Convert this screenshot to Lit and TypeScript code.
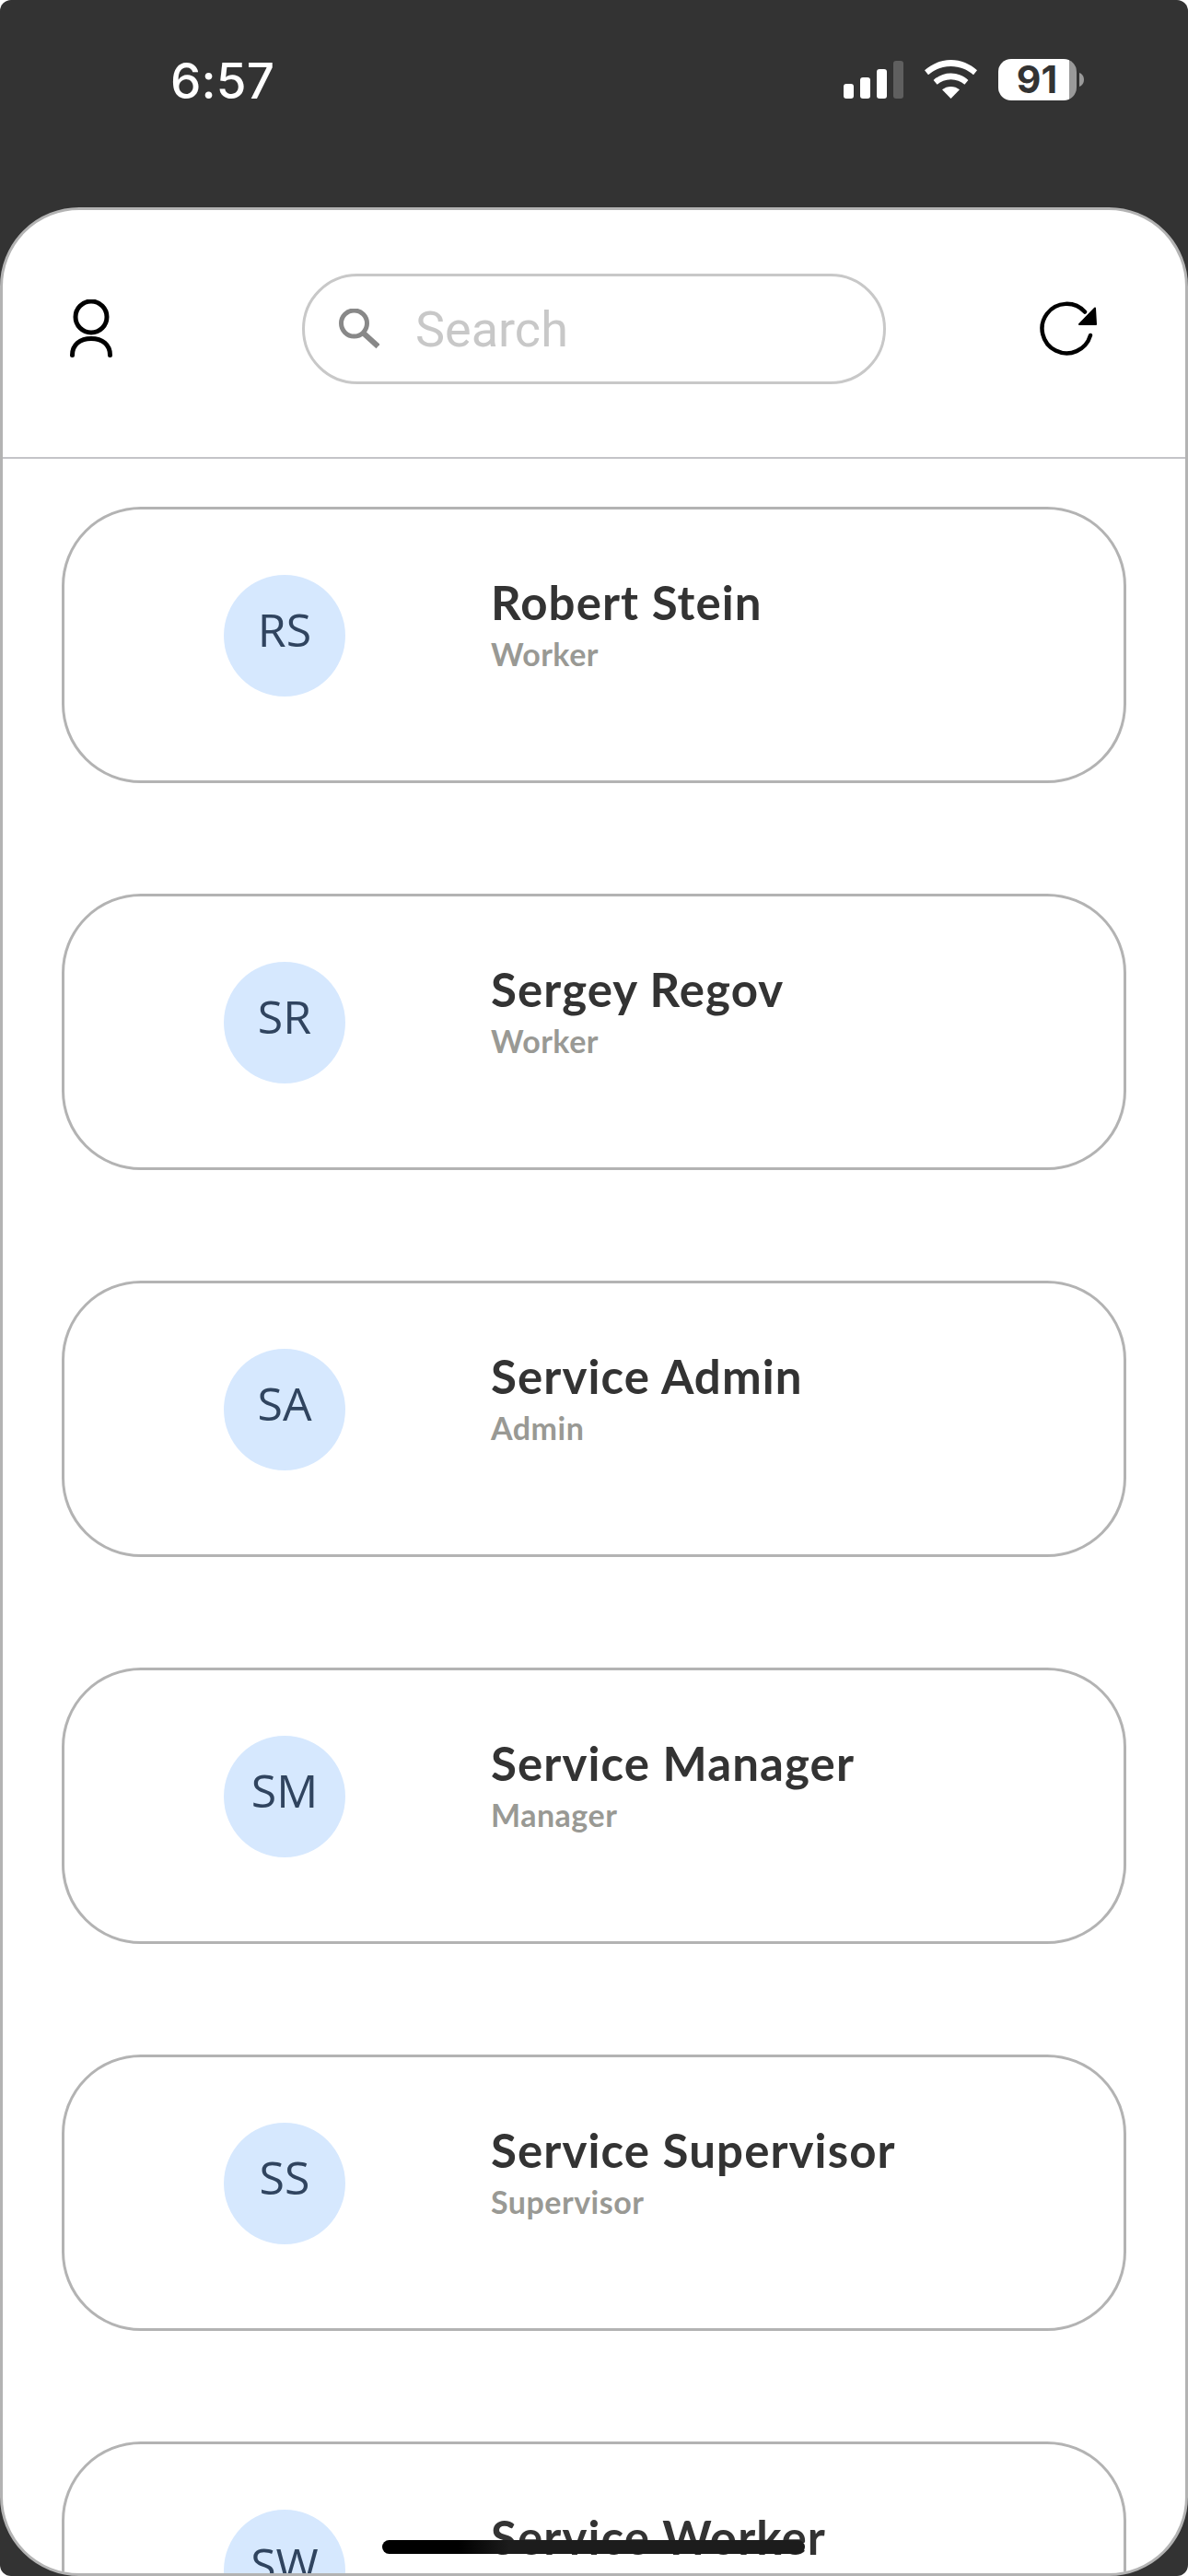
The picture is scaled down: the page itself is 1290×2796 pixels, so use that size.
import { LitElement, html, css, svg } from "lit";
import { customElement } from "lit/decorators.js";

const PEOPLE = [
  ["RS", "Robert Stein", "Worker"],
  ["SR", "Sergey Regov", "Worker"],
  ["SA", "Service Admin", "Admin"],
  ["SM", "Service Manager", "Manager"],
  ["SS", "Service Supervisor", "Supervisor"],
  ["SW", "Service Worker", "Worker"],
];

@customElement("app-root")
export class AppRoot extends LitElement {
  static styles = css`
    :host { display: block; width: 1290px; height: 2796px; background: #fff; }
    .screen { width: 1290px; height: 2796px; background: #333; border-radius: 12px; overflow: hidden; display: flex; flex-direction: column; position: relative; }
    .status { height: 225px; flex: none; box-sizing: border-box; padding: 61px 113px 0 185px; display: flex; justify-content: space-between; align-items: flex-start; }
    .time { font: 500 53px/54px Inter, sans-serif; color: #fff; letter-spacing: 0.2px; }
    .status-icons { display: flex; align-items: flex-start; }
    .sig { margin-top: 5px; }
    .wifi { margin: 4px 0 0 23px; }
    .batt { margin: 3px 0 0 23px; position: relative; width: 93px; height: 45px; }
    .batt svg { position: absolute; inset: 0; }
    .batt span { position: absolute; left: 0; width: 84px; top: 0; text-align: center; font: 700 41px/45px Inter, sans-serif; color: #333; }
    .panel { flex: 1; min-height: 0; box-sizing: border-box; background: #fff; border: 3px solid #b3b3b3; border-radius: 86px; overflow: hidden; }
    .head { height: 270px; box-sizing: border-box; border-bottom: 2px solid #c4c4c8; padding: 69px 0 0 73px; display: flex; align-items: flex-start; }
    .search { width: 634px; height: 120px; box-sizing: border-box; margin-left: 206px; border: 3px solid #c8c8c8; border-radius: 60px; display: flex; align-items: center; padding-left: 37px; }
    .search span { font: 400 54px Roboto, sans-serif; color: #c8c8c8; margin-left: 39px; }
    .refresh { margin-left: 167px; margin-top: 30px; }
    .person { margin-top: 28px; }
    .list { padding: 52px 64px 0 64px; display: flex; flex-direction: column; gap: 120px; }
    .card { height: 300px; flex: none; box-sizing: border-box; border: 3px solid #b3b3b3; border-radius: 86px; display: flex; align-items: flex-start; padding: 71px 0 0 173px; }
    .avatar { width: 132px; height: 132px; border-radius: 50%; background: #d6e8fe; color: #30445f; display: flex; align-items: center; justify-content: center; font: 400 50px "Open Sans", sans-serif; flex: none; }
    .avatar span { margin-top: -14px; }
    .info { margin-left: 158px; }
    .name { font: 700 51px/60px Lato, sans-serif; letter-spacing: 1.1px; color: #333; }
    .role { font: 700 34px/36px Lato, sans-serif; letter-spacing: 0.5px; color: #999994; margin-top: 8px; }
    .home { position: absolute; left: 415px; top: 2757px; width: 459px; height: 15px; border-radius: 8px; background: linear-gradient(90deg, #000 0%, #000 18%, #1c1c1c 30%, #1c1c1c 100%); }
  `;

  private sig() {
    const bars = [[0, 25, "#fff"], [18, 18, "#fff"], [36, 9, "#fff"], [54, 0, "#5f5f5f"]] as const;
    return html`<svg class="sig" width="65" height="41" viewBox="0 0 65 41">
      ${bars.map(([x, y, c]) => svg`<rect x=${x} y=${y} width="11" height=${41 - y} rx="3" fill=${c}></rect>`)}
    </svg>`;
  }

  render() {
    return html`<div class="screen">
      <div class="status">
        <div class="time">6:57</div>
        <div class="status-icons">
          ${this.sig()}
          <svg class="wifi" width="57" height="42" viewBox="0 0 57 42" fill="#fff">
            <path d="M28.500 0C17.500 0 7.800 4.300 0 11.300L4 16.300C10.400 10.500 19 7 28.500 7S46.600 10.500 53 16.300L57 11.300C49.200 4.300 39.500 0 28.500 0Z"></path>
            <path d="M28.500 14.500C21.300 14.500 14.600 17.300 9.600 21.900L13.600 26.800C17.500 23.300 22.700 21.200 28.500 21.200S39.500 23.300 43.400 26.800L47.400 21.900C42.400 17.300 35.700 14.500 28.500 14.500Z"></path>
            <path d="M28.500 29C25 29 21.800 30.200 19 32.300L28.500 42L38 32.300C35.200 30.200 32 29 28.500 29Z"></path>
          </svg>
          <div class="batt">
            <svg width="93" height="45" viewBox="0 0 93 45">
              <defs><clipPath id="bc"><rect width="85" height="45" rx="14"></rect></clipPath></defs>
              <g clip-path="url(#bc)"><rect width="77" height="45" fill="#fff"></rect><rect x="77" width="8" height="45" fill="#9a9a9a"></rect></g>
              <path d="M88 15C91 16 93 19 93 22.500S91 29 88 30Z" fill="#9a9a9a"></path>
            </svg>
            <span>91</span>
          </div>
        </div>
      </div>
      <div class="panel">
        <div class="head">
          <svg class="person" width="46" height="63" viewBox="0 0 46 63" fill="none" stroke="#000" stroke-width="5" stroke-linecap="round">
            <circle cx="23" cy="19" r="17"></circle>
            <path d="M2.500 60.500C2.500 49 11 42.500 23 42.500S43.500 49 43.500 60.500"></path>
          </svg>
          <div class="search">
            <svg width="44" height="44" viewBox="0 0 44 44" fill="none" stroke="#888">
              <circle cx="16.500" cy="16" r="14" stroke-width="5"></circle>
              <path d="M26 26L42.500 41" stroke-width="6"></path>
            </svg>
            <span>Search</span>
          </div>
          <svg class="refresh" width="63" height="60" viewBox="0 0 63 60" fill="none">
            <path d="M49 11.500A26.750 26.750 0 1 0 55 37" stroke="#000" stroke-width="4.500" stroke-linecap="round"></path>
            <path d="M43 25L60 7.500L61 25Z" fill="#000" stroke="#000" stroke-width="2" stroke-linejoin="round"></path>
          </svg>
        </div>
        <div class="list">
          ${PEOPLE.map(([i, n, r]) => html`<div class="card">
            <div class="avatar"><span>${i}</span></div>
            <div class="info"><div class="name">${n}</div><div class="role">${r}</div></div>
          </div>`)}
        </div>
      </div>
      <div class="home"></div>
    </div>`;
  }
}
